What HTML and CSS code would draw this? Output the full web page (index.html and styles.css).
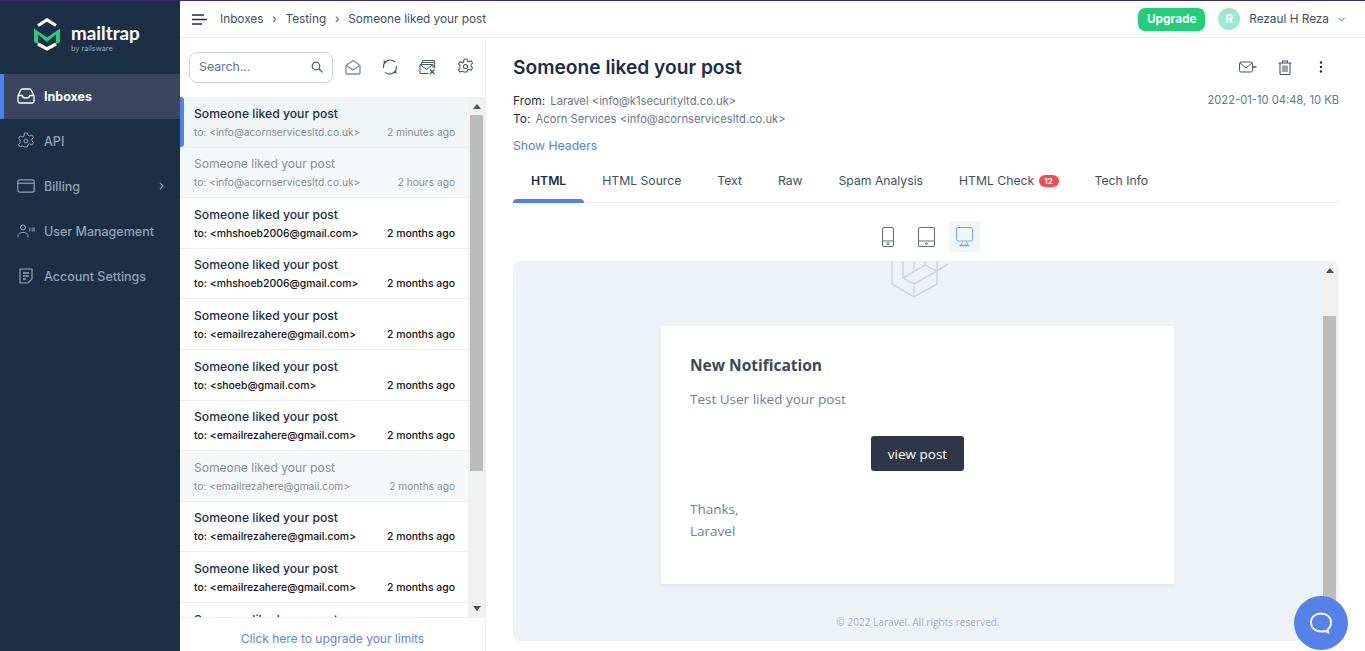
FILE: index.html
```html
<!DOCTYPE html>
<html lang="en">

<head>
  <meta charset="UTF-8" />
  <meta name="viewport" content="width=device-width, initial-scale=1.0" />
  <title>Someone liked your post</title>
  <link rel="stylesheet" href="styles.css">
</head>

<body>
  <!-- Sidebar -->
  <aside class="sidebar">
    <div class="logo">
      <svg width="26" height="33" viewBox="0 0 26 33" fill="none">
        <path d="M4 7.500 13 2l9 5.500" stroke="#fff" stroke-width="3.200" />
        <path d="M4 26 13 31l9-5" stroke="#fff" stroke-width="3.200" />
        <path d="M0 10.500 13 19.500 26 10.500V24l-4 2V16.500L13 24 4 16.500V26L0 24z" fill="#22d17c" />
      </svg>
      <div class="logo-text">
        <div class="logo-name">mailtrap</div>
        <div class="logo-sub">by railsware</div>
      </div>
    </div>
    <nav class="nav">
      <a class="nav-item active">
        <svg width="18" height="16" viewBox="0 0 18 16" fill="none" stroke="currentColor" stroke-width="1.300">
          <path d="M1 8 3.500 2.500Q4 1 5.500 1h7q1.500 0 2 1.500L17 8v5q0 2-2 2H3q-2 0-2-2z" />
          <path d="M1.500 7.500H5q.5 2.500 4 2.500t4-2.500h3.500" />
        </svg>
        Inboxes
      </a>
      <a class="nav-item">
        <svg width="18" height="18" viewBox="0 0 18 18" fill="none" stroke="currentColor" stroke-width="1">
          <path d="M7.500 1h3l.5 2.300 1.700.8 2.100-1.200 1.700 2.400-1.600 1.700v1.900l1.600 1.700-1.700 2.400-2.100-1.200-1.700.8-.5 2.300h-3L7 14.600l-1.700-.8-2.100 1.200-1.700-2.400 1.600-1.700V8L1.500 6.300l1.700-2.400 2.100 1.200 1.700-.8z" />
          <circle cx="9" cy="9" r="2" />
        </svg>
        API
      </a>
      <a class="nav-item">
        <svg width="18" height="14" viewBox="0 0 18 14" fill="none" stroke="currentColor" stroke-width="1.200">
          <rect x=".8" y=".8" width="16.400" height="12.400" rx="2" />
          <path d="M1 4.200h16" />
        </svg>
        Billing
        <svg class="nav-arrow" width="6" height="8" viewBox="0 0 6 8" fill="none" stroke="currentColor" stroke-width="1.200">
          <path d="M1 1l3 3-3 3" />
        </svg>
      </a>
      <a class="nav-item">
        <svg width="18" height="14" viewBox="0 0 18 14" fill="none" stroke="currentColor" stroke-width="1">
          <circle cx="6" cy="3.500" r="2.500" />
          <path d="M1 13.500V12q0-3.500 5-3.500T11 12v1.500" />
          <path d="M12 5.500h1.500M14.500 5.500H18" stroke-width="4" opacity=".6" />
        </svg>
        User Management
      </a>
      <a class="nav-item">
        <svg width="18" height="16" viewBox="0 0 18 16" fill="none" stroke="currentColor" stroke-width="1.200">
          <path d="M3 1h12v10l-4 4H3z" />
          <path d="M6 5h6M6 8h6M6 11h3" stroke-width="1.500" />
        </svg>
        Account Settings
      </a>
    </nav>
  </aside>

  <div class="page">
    <!-- Top bar -->
    <header class="topbar">
      <svg class="burger" width="15" height="11" viewBox="0 0 15 11" stroke="#1b2f45" stroke-width="1.500">
        <path d="M0 1h12M0 5.500h15M0 10h10" />
      </svg>
      <div class="crumbs">
        <span>Inboxes</span><i>›</i><span>Testing</span><i>›</i><span>Someone liked your post</span>
      </div>
      <a class="upgrade">Upgrade</a>
      <span class="avatar">R</span>
      <span class="user-name">Rezaul H Reza</span>
      <svg class="user-arrow" width="7" height="5" viewBox="0 0 7 5" fill="none" stroke="#6b7280" stroke-width="1">
        <path d="M.5 1l3 3 3-3" />
      </svg>
    </header>

    <div class="content">
      <!-- Message list -->
      <section class="list-panel">
        <div class="tools">
          <div class="search">
            <span>Search...</span>
            <svg width="12" height="12" viewBox="0 0 12 12" fill="none" stroke="#45566a" stroke-width="1.200">
              <circle cx="5" cy="5" r="3.800" />
              <path d="M8 8l3.300 3.300" />
            </svg>
          </div>
          <div class="tool-icons">
            <svg width="16" height="16" viewBox="0 0 16 16" fill="none" stroke="#7b8a9c" stroke-width="1.300">
              <path d="M1 6.500 8 1.500l7 5V14q0 1-1 1H2q-1 0-1-1z" />
              <path d="M1.500 6.500 8 11l6.500-4.500" />
            </svg>
            <svg width="16" height="16" viewBox="0 0 16 16" fill="none" stroke="#45566a" stroke-width="1.100">
              <path d="M3.500 2.800A6.500 6.500 0 0 1 12.800 3" />
              <path d="M14.400 7A6.500 6.500 0 0 1 12.800 12.800" />
              <path d="M12.500 13.200A6.500 6.500 0 0 1 3 13" />
              <path d="M1.600 9A6.500 6.500 0 0 1 3.200 3.200" />
              <path d="M1.500 1.500l4 .5-3.500 3.500zM14.500 14.500l-4-.5 3.500-3.500z" fill="#45566a" stroke="none" />
            </svg>
            <svg width="17" height="16" viewBox="0 0 17 16" fill="none" stroke="#45566a" stroke-width="1">
              <path d="M3.500 3V1.500h12V3M2.500 5V3.500h13V9" />
              <path d="M9.500 14.500H1V5.500h13V9" />
              <path d="M1 5.500 7.500 10.500 14 5.500" />
              <path d="M11 10.500l4.500 4.500M15.500 10.500 11 15" stroke-width="1.300" />
            </svg>
            <svg width="17" height="17" viewBox="0 0 18 18" fill="none" stroke="#45566a" stroke-width="1.100">
              <path d="M7.500 1h3l.5 2.300 1.700.8 2.100-1.200 1.700 2.400-1.600 1.700v1.900l1.600 1.700-1.700 2.400-2.100-1.200-1.700.8-.5 2.300h-3L7 14.600l-1.700-.8-2.100 1.200-1.700-2.400 1.600-1.700V8L1.500 6.300l1.700-2.400 2.100 1.200 1.700-.8z" />
              <circle cx="9" cy="9" r="2.200" />
            </svg>
          </div>
        </div>

        <div class="list-wrap">
          <ul class="list">
            <li class="row selected">
              <div class="row-title">Someone liked your post</div>
              <div class="row-sub"><span>to: &lt;info@acornservicesltd.co.uk&gt;</span><span>2 minutes ago</span></div>
            </li>
            <li class="row read">
              <div class="row-title">Someone liked your post</div>
              <div class="row-sub"><span>to: &lt;info@acornservicesltd.co.uk&gt;</span><span>2 hours ago</span></div>
            </li>
            <li class="row">
              <div class="row-title">Someone liked your post</div>
              <div class="row-sub"><span>to: &lt;mhshoeb2006@gmail.com&gt;</span><span>2 months ago</span></div>
            </li>
            <li class="row">
              <div class="row-title">Someone liked your post</div>
              <div class="row-sub"><span>to: &lt;mhshoeb2006@gmail.com&gt;</span><span>2 months ago</span></div>
            </li>
            <li class="row">
              <div class="row-title">Someone liked your post</div>
              <div class="row-sub"><span>to: &lt;emailrezahere@gmail.com&gt;</span><span>2 months ago</span></div>
            </li>
            <li class="row">
              <div class="row-title">Someone liked your post</div>
              <div class="row-sub"><span>to: &lt;shoeb@gmail.com&gt;</span><span>2 months ago</span></div>
            </li>
            <li class="row">
              <div class="row-title">Someone liked your post</div>
              <div class="row-sub"><span>to: &lt;emailrezahere@gmail.com&gt;</span><span>2 months ago</span></div>
            </li>
            <li class="row read">
              <div class="row-title">Someone liked your post</div>
              <div class="row-sub"><span>to: &lt;emailrezahere@gmail.com&gt;</span><span>2 months ago</span></div>
            </li>
            <li class="row">
              <div class="row-title">Someone liked your post</div>
              <div class="row-sub"><span>to: &lt;emailrezahere@gmail.com&gt;</span><span>2 months ago</span></div>
            </li>
            <li class="row">
              <div class="row-title">Someone liked your post</div>
              <div class="row-sub"><span>to: &lt;emailrezahere@gmail.com&gt;</span><span>2 months ago</span></div>
            </li>
            <li class="row">
              <div class="row-title">Someone liked your post</div>
            </li>
          </ul>
          <div class="scroll list-scroll">
            <span class="arrow-up"></span>
            <span class="thumb"></span>
            <span class="arrow-down"></span>
          </div>
        </div>

        <div class="list-foot">Click here to upgrade your limits</div>
      </section>

      <!-- Message view -->
      <main class="message">
        <div class="msg-head">
          <h1>Someone liked your post</h1>
          <div class="msg-actions">
            <svg width="18" height="12" viewBox="0 0 18 12" fill="none" stroke="#45566a" stroke-width="1">
              <rect x=".5" y="1" width="13" height="10" rx="1.500" />
              <path d="M1 2l6 5 6-5" />
              <path d="M14 6h3.500" stroke-width="1.500" />
            </svg>
            <svg width="14" height="15" viewBox="0 0 14 15" fill="none" stroke="#45566a" stroke-width="1.100">
              <path d="M.5 3h13M4.500 3V1h5v2" />
              <path d="M2 3v10.500q0 1 1 1h8q1 0 1-1V3" />
              <path d="M5 5.500v6.500M7 5.500v6.500M9 5.500v6.500" />
            </svg>
            <svg width="4" height="12" viewBox="0 0 4 12" fill="#1b2f45">
              <circle cx="2" cy="1.500" r="1.200" />
              <circle cx="2" cy="6" r="1.200" />
              <circle cx="2" cy="10.500" r="1.200" />
            </svg>
          </div>
        </div>

        <div class="msg-meta">
          <div>
            <p><b>From:</b> Laravel &lt;info@k1securityltd.co.uk&gt;</p>
            <p><b>To:</b> Acorn Services &lt;info@acornservicesltd.co.uk&gt;</p>
          </div>
          <div class="msg-date">2022-01-10 04:48, 10 KB</div>
        </div>
        <a class="show-headers">Show Headers</a>

        <div class="tabs">
          <a class="tab active">HTML</a>
          <a class="tab">HTML Source</a>
          <a class="tab">Text</a>
          <a class="tab">Raw</a>
          <a class="tab">Spam Analysis</a>
          <a class="tab">HTML Check <em class="badge">12</em></a>
          <a class="tab">Tech Info</a>
        </div>

        <div class="devices">
          <span class="device">
            <svg width="14" height="20" viewBox="0 0 14 20" fill="none" stroke="#5a6b80" stroke-width="1">
              <rect x="1.500" y=".5" width="11" height="19" rx="1.500" />
              <path d="M1.500 14h11" />
              <circle cx="7" cy="16.700" r="1" />
            </svg>
          </span>
          <span class="device">
            <svg width="17" height="20" viewBox="0 0 17 20" fill="none" stroke="#5a6b80" stroke-width="1">
              <rect x=".5" y=".5" width="16" height="19" rx="1.500" />
              <path d="M.5 14h16" />
              <circle cx="8.500" cy="16.700" r="1" />
            </svg>
          </span>
          <span class="device on">
            <svg width="17" height="20" viewBox="0 0 17 20" fill="none" stroke="#7ea6f4" stroke-width="1">
              <rect x=".5" y=".5" width="16" height="13.500" rx="1.500" />
              <path d="M6.500 14.500 5.500 18M10.500 14.500l1 3.500" />
              <path d="M3.500 18.500h10" stroke-width="1.800" />
            </svg>
          </span>
        </div>

        <div class="preview">
          <div class="mail">
            <div class="mail-logo">
              <svg width="76" height="37" viewBox="0 0 76 37" fill="none" stroke="#cfd6e0" stroke-width="1.500">
                <path d="M12 0V23L34 36 57 23V10" />
                <path d="M34 36V23L23 17V0" />
                <path d="M23 17 45 4 57 10" />
                <path d="M34 23 57 10 68 3" />
                <path d="M34 0V10M45 4V0M57 10V0" />
              </svg>
            </div>
            <div class="mail-card">
              <h2>New Notification</h2>
              <p>Test User liked your post</p>
              <div class="mail-btn-wrap"><a class="mail-btn">view post</a></div>
              <p class="mail-sign">Thanks,<br>Laravel</p>
            </div>
            <div class="mail-foot">© 2022 Laravel. All rights reserved.</div>
          </div>
          <div class="scroll preview-scroll">
            <span class="arrow-up"></span>
            <span class="thumb"></span>
          </div>
        </div>
      </main>
    </div>
  </div>

  <!-- Support chat button -->
  <a class="chat">
    <svg width="24" height="24" viewBox="0 0 24 24" fill="none" stroke="#fff" stroke-width="1.800">
      <path d="M12 2.500c5.500 0 10 3.500 10 8.800 0 3.500-1.500 6-3.500 7.200l.8 3-3.300-1.500c-1.300.3-2.600.5-4 .5C6.500 20.500 2 16.800 2 11.300 2 6 6.500 2.500 12 2.500z" />
    </svg>
  </a>
</body>

</html>
```

FILE: styles.css
```css
* {
  box-sizing: border-box;
}

html,
body {
  height: 100%;
}

body {
  margin: 0;
  display: flex;
  overflow: hidden;
  font-family: Inter, 'Noto Sans', sans-serif;
  color: #1b2f45;
  background: #fff;
  border-top: 1px solid #3a2a6e;
}

/* Sidebar */
.sidebar {
  width: 180px;
  flex: none;
  background: #1b2f45;
  color: #93a3b5;
}

.logo {
  height: 73px;
  padding: 17px 0 0 34px;
  display: flex;
  gap: 11px;
}

.logo-text {
  color: #fff;
}

.logo-name {
  font-family: Lato, sans-serif;
  font-size: 18.800px;
  font-weight: 700;
  line-height: 22px;
  margin-top: 4px;
}

.logo-sub {
  font-size: 7.300px;
  line-height: 9px;
  color: #9aa8b8;
}

.nav-item {
  height: 45px;
  padding: 0 0 1px 17px;
  display: flex;
  align-items: center;
  gap: 9px;
  font-size: 12.500px;
  font-weight: 500;
  position: relative;
}

.nav-item.active {
  background: #3a455f;
  color: #fff;
  font-weight: 700;
  border-left: 4px solid #4e82ee;
  padding-left: 13px;
}

.nav-arrow {
  margin-left: auto;
  margin-right: 15px;
}

/* Top bar */
.page {
  flex: 1;
  min-width: 0;
  display: flex;
  flex-direction: column;
}

.topbar {
  height: 37px;
  flex: none;
  padding: 0 20px 0 12px;
  display: flex;
  align-items: center;
  border-bottom: 1px solid #eceef1;
  font-size: 11.800px;
}

.crumbs {
  margin-left: 13px;
  padding-bottom: 1px;
  flex: 1;
  display: flex;
  align-items: center;
  color: #3d4f63;
}

.crumbs i {
  font-style: normal;
  width: 22px;
  text-align: center;
}

.upgrade {
  width: 67px;
  height: 23px;
  line-height: 23px;
  text-align: center;
  background: #22cf79;
  color: #fff;
  font-weight: 700;
  border-radius: 7px;
}

.avatar {
  width: 22px;
  height: 22px;
  margin: 0 9px 0 13px;
  line-height: 22px;
  text-align: center;
  border-radius: 50%;
  background: #9be9d3;
  color: #fff;
  font-weight: 700;
}

.user-name {
  color: #3d4f63;
}

.user-arrow {
  margin-left: 9px;
}

.content {
  flex: 1;
  min-height: 0;
  display: flex;
}

/* Message list */
.list-panel {
  width: 306px;
  flex: none;
  border-right: 1px solid #eceef1;
  display: flex;
  flex-direction: column;
}

.tools {
  height: 59px;
  flex: none;
  padding: 14px 11px 0 9px;
  display: flex;
}

.search {
  width: 144px;
  height: 31px;
  padding: 0 9px 2px 9px;
  display: flex;
  align-items: center;
  justify-content: space-between;
  border: 1px solid #cdd2d9;
  border-radius: 8px;
  font-size: 12.300px;
  color: #66768a;
}

.tool-icons {
  flex: 1;
  height: 31px;
  padding: 0 0 2px 12px;
  display: flex;
  align-items: center;
  justify-content: space-between;
}

.list-wrap {
  flex: 1;
  min-height: 0;
  display: flex;
  overflow: hidden;
}

.list {
  flex: 1;
  margin: 0;
  padding: 0;
  list-style: none;
  overflow: hidden;
}

.row {
  height: 50.6px;
  padding: 7.600px 13px 0 14px;
  border-bottom: 1px solid #eceef1;
}

.row-title {
  font-size: 12.200px;
  font-weight: 500;
  line-height: 17px;
  color: #1b2f45;
}

.row-sub {
  margin-top: 3px;
  display: flex;
  justify-content: space-between;
  font-size: 10.450px;
  font-weight: 500;
  line-height: 15px;
  color: #111;
}

.row.read {
  background: #f5f8f8;
}

.row.read .row-title {
  font-size: 12.050px;
  font-weight: 400;
  color: #858f9b;
}

.row.read .row-sub {
  font-size: 10.200px;
  font-weight: 400;
  color: #858f9b;
}

.row.selected {
  background: #f0f5f6;
  position: relative;
}

.row.selected::before {
  content: "";
  position: absolute;
  left: 0;
  top: 0;
  bottom: 0;
  width: 4px;
  background: #4e82ee;
  border-radius: 0 3px 3px 0;
}

.row.selected .row-sub {
  font-size: 10.200px;
  font-weight: 400;
  color: #858f9b;
}

.list-foot {
  height: 34px;
  flex: none;
  padding-top: 12px;
  text-align: center;
  font-size: 12px;
  line-height: 18px;
  color: #5a84ee;
  border-top: 1px solid #eceef1;
}

/* Fake native scrollbars */
.scroll {
  width: 17px;
  flex: none;
  background: #f1f1f1;
  display: flex;
  flex-direction: column;
  align-items: center;
}

.thumb {
  width: 13px;
  background: #bcbcbc;
}

.arrow-up {
  margin-top: 7px;
  border: 4px solid transparent;
  border-top: 0;
  border-bottom: 5px solid #505050;
}

.arrow-down {
  margin-top: auto;
  margin-bottom: 6px;
  border: 4px solid transparent;
  border-bottom: 0;
  border-top: 5px solid #505050;
}

.list-scroll .thumb {
  height: 356px;
  margin-top: 6px;
}

/* Message view */
.message {
  flex: 1;
  min-width: 0;
  padding: 15px 26px 10px 27px;
  display: flex;
  flex-direction: column;
}

.msg-head {
  display: flex;
  justify-content: space-between;
  align-items: center;
}

h1 {
  margin: 0;
  font-size: 19.200px;
  font-weight: 600;
  line-height: 28px;
  color: #1b2f45;
}

.msg-actions {
  display: flex;
  align-items: center;
  gap: 21px;
  padding-right: 16px;
}

.msg-actions svg:last-child {
  margin-left: 6px;
}

.msg-meta {
  margin-top: 11px;
  display: flex;
  justify-content: space-between;
  font-size: 11.200px;
  line-height: 17px;
  color: #66768a;
}

.msg-meta p {
  margin: 0;
}

.msg-meta b {
  margin-right: 2px;
  font-size: 12px;
  font-weight: 400;
  color: #1b2f45;
}

.msg-date {
  color: #66768a;
}

.show-headers {
  margin-top: 10px;
  font-size: 12.200px;
  line-height: 16px;
  color: #4e7fe9;
}

.tabs {
  margin-top: 9px;
  display: flex;
  border-bottom: 1px solid #eceef1;
  height: 40px;
}

.tab {
  height: 40px;
  padding: 9px 18px 0;
  font-size: 12.200px;
  line-height: 17px;
  color: #3d4f63;
  position: relative;
}

.tab.active {
  color: #1b2f45;
  font-weight: 600;
}

.tab.active::after {
  content: "";
  position: absolute;
  left: 0;
  right: 0;
  bottom: 0;
  height: 4px;
  background: #4e82ee;
  border-radius: 4px 4px 0 0;
}

.badge {
  display: inline-block;
  width: 20px;
  height: 12px;
  margin-left: 1px;
  font-style: normal;
  font-size: 8px;
  font-weight: 700;
  line-height: 12px;
  text-align: center;
  color: #fff;
  background: #f44c4f;
  border-radius: 6px;
  vertical-align: 1px;
}

.devices {
  margin-top: 18px;
  display: flex;
  justify-content: center;
  gap: 7px;
}

.device {
  width: 31px;
  height: 31px;
  display: flex;
  align-items: center;
  justify-content: center;
  border-radius: 3px;
}

.device.on {
  background: #f0f5f6;
}

.preview {
  margin-top: 9px;
  flex: 1;
  min-height: 0;
  display: flex;
  overflow: hidden;
  border-radius: 8px;
  background: #edf2f7;
}

.mail {
  flex: 1;
  min-width: 0;
  font-family: 'Open Sans', sans-serif;
  font-size: 13.500px;
  color: #718096;
}

.mail-logo {
  height: 37px;
  display: flex;
  justify-content: center;
}

.mail-card {
  width: 513px;
  height: 258px;
  margin: 28px 149px 0 148px;
  padding: 28px 29px;
  background: #fff;
  box-shadow: 0 2px 3px rgba(45, 55, 72, 0.05);
}

.mail-card h2 {
  margin: 0;
  font-size: 15.500px;
  font-weight: 700;
  line-height: 22px;
  color: #3d4852;
}

.mail-card p {
  margin: 12px 0 0;
  line-height: 22px;
}

.mail-btn-wrap {
  margin-top: 26px;
  text-align: center;
}

.mail-btn {
  display: inline-block;
  width: 93px;
  height: 35px;
  line-height: 37px;
  background: #2d3748;
  color: #fff;
  border-radius: 3px;
}

.mail-card .mail-sign {
  margin-top: 27px;
}

.mail-foot {
  margin-top: 30px;
  text-align: center;
  font-size: 10.100px;
  line-height: 16px;
  color: #b0adc5;
}

.preview-scroll {
  width: 16px;
  align-items: flex-start;
}

.preview-scroll .arrow-up {
  margin-left: 3px;
}

.preview-scroll .thumb {
  height: 330px;
  margin-top: 43px;
}

/* Support chat button */
.chat {
  position: absolute;
  left: 1294px;
  top: 596px;
  width: 54px;
  height: 54px;
  display: flex;
  align-items: center;
  justify-content: center;
  border-radius: 50%;
  background: #5581e8;
}
```
